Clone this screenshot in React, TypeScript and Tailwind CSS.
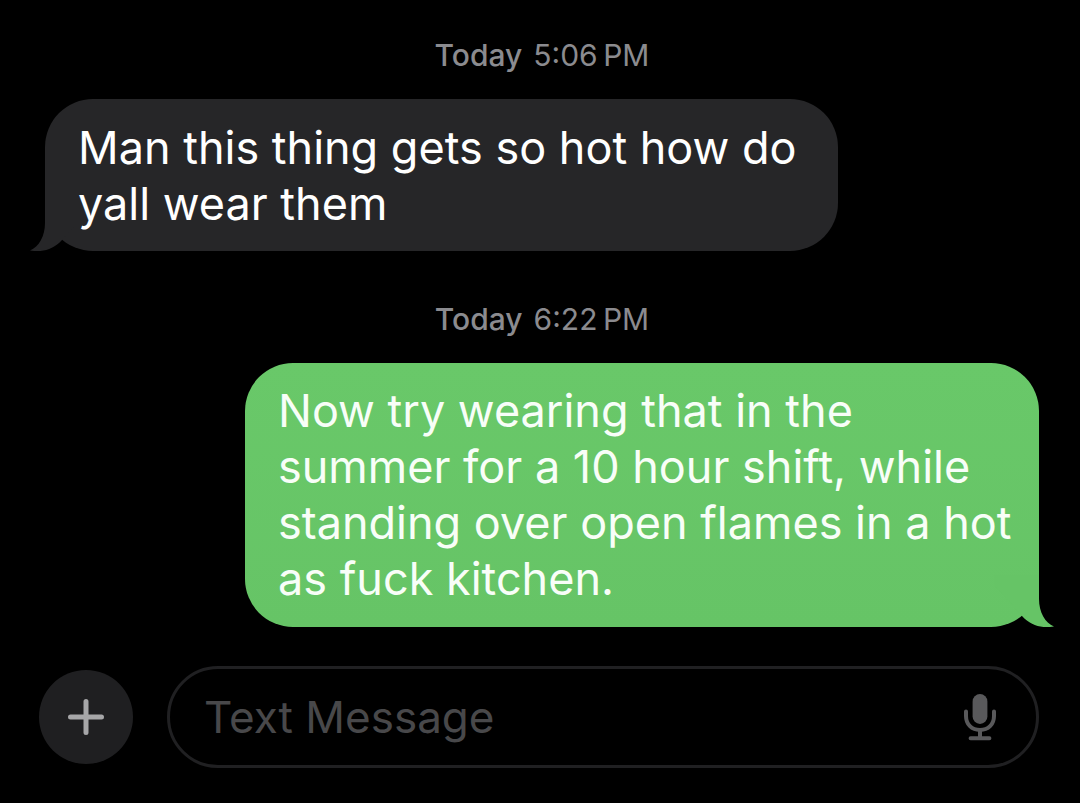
interface Message {
    id: number;
    day: string;
    time: string;
    text: string;
    sent: boolean;
}

const messages: Message[] = [
    {
        id: 1,
        day: 'Today',
        time: '5:06\u202fPM',
        text: 'Man this thing gets so hot how do yall wear them',
        sent: false,
    },
    {
        id: 2,
        day: 'Today',
        time: '6:22\u202fPM',
        text: 'Now try wearing that in the summer for a 10 hour shift, while standing over open flames in a hot as fuck kitchen.',
        sent: true,
    },
];

function Tail({ sent }: { sent: boolean }) {
    return (
        <svg
            viewBox="0 0 60 52"
            aria-hidden="true"
            className={
                sent
                    ? 'absolute bottom-0 -right-[15px] w-[60px] h-[52px] -scale-x-100 fill-[#66c466]'
                    : 'absolute bottom-0 -left-[15px] w-[60px] h-[52px] fill-[#262628]'
            }
        >
            <path d="M15 0 V24 C15 37 9 48 0 51.5 C12 53.5 23 51 32 41 L60 10 V0 Z" />
        </svg>
    );
}

function Bubble({ text, sent }: { text: string; sent: boolean }) {
    return (
        <div
            className={
                sent
                    ? 'relative self-end max-w-[794px] rounded-[48px] bg-linear-to-b from-[#69c869] to-[#66c466] py-5 pl-[33px] pr-6 text-[#f8fef8]'
                    : 'relative self-start max-w-[793px] rounded-[48px] bg-[#262628] pt-[21px] pb-[19px] pl-[33px] pr-6 text-white'
            }
        >
            <Tail sent={sent} />
            <p className="relative text-[45px] leading-[56px]">{text}</p>
        </div>
    );
}

function Composer() {
    return (
        <form className="flex items-center gap-[34px] pl-[39px] pr-[41px]" onSubmit={(e) => e.preventDefault()}>
            <button
                type="button"
                aria-label="Add attachment"
                className="flex size-[94px] shrink-0 items-center justify-center rounded-full bg-[#1f1f21]"
            >
                <svg viewBox="0 0 38 38" className="size-[38px] stroke-[#a6a6a8]" strokeWidth="5" strokeLinecap="round">
                    <path d="M19 3.5 V34.5 M3.5 19 H34.5" />
                </svg>
            </button>
            <div className="flex h-[102px] min-w-0 flex-1 items-center rounded-full border-[3px] border-[#202022] pl-[34px] pr-10">
                <input
                    type="text"
                    aria-label="Text Message"
                    placeholder="Text Message"
                    className="min-w-0 flex-1 bg-transparent text-[44px] leading-[56px] text-white outline-none placeholder:text-[#48484a]"
                />
                <button type="button" aria-label="Dictate" className="shrink-0">
                    <svg viewBox="0 0 32 48" className="h-12 w-8" fill="none" stroke="#59595b" strokeWidth="4" strokeLinecap="round">
                        <rect x="8.6" y="1" width="14.8" height="30" rx="7.4" fill="#59595b" stroke="none" />
                        <path d="M2 18.5 V23 C2 31.5 7.8 37 16 37 C24.2 37 30 31.5 30 23 V18.5 M16 37 V45 M6.6 45.2 H25.4" />
                    </svg>
                </button>
            </div>
        </form>
    );
}

export default function App() {
    return (
        <main className="flex min-h-screen flex-col bg-black pt-[37px] pb-9 font-['Inter',sans-serif]">
            <div className="mb-[39px] flex flex-col gap-[50px] pl-[45px] pr-[41px]">
                {messages.map((msg) => (
                    <div key={msg.id} className="flex flex-col gap-[26px]">
                        <p className="flex justify-center gap-[11px] text-[30px] leading-9 text-[#8b8b8f]">
                            <span className="font-medium">{msg.day}</span>
                            <time>{msg.time}</time>
                        </p>
                        <Bubble text={msg.text} sent={msg.sent} />
                    </div>
                ))}
            </div>
            <Composer />
        </main>
    );
}
